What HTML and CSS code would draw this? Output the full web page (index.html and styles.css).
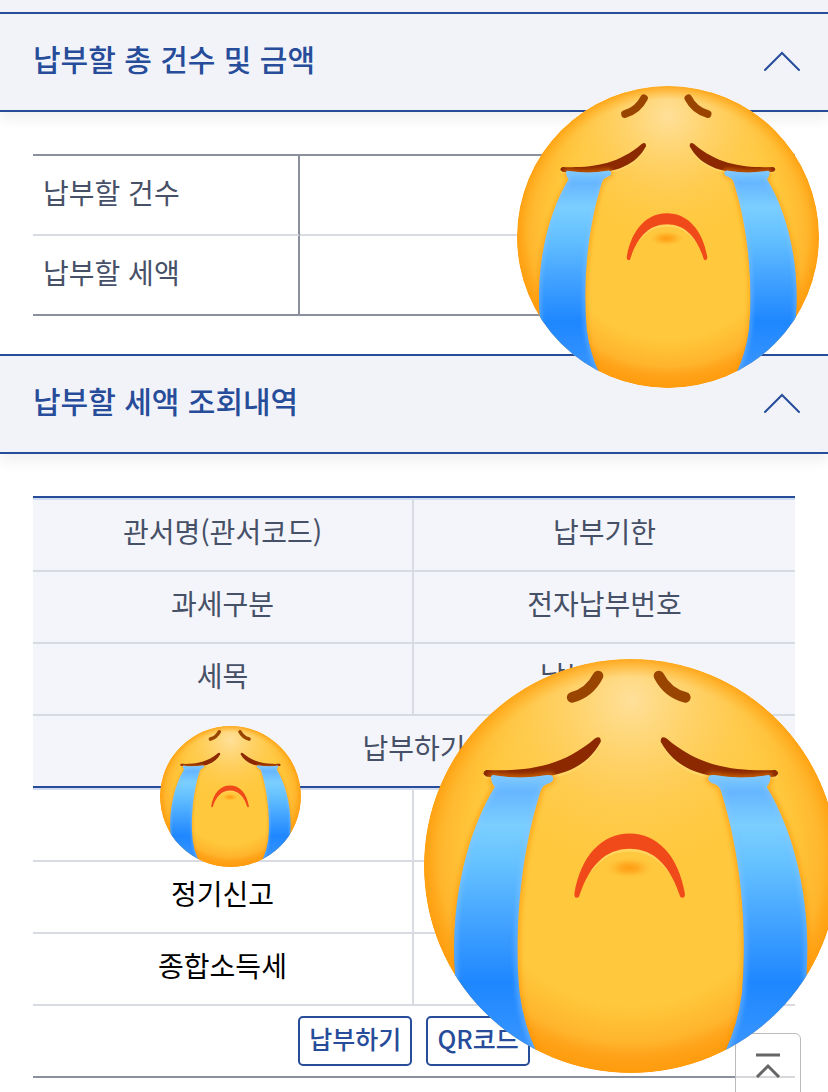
FILE: index.html
```html
<!DOCTYPE html>
<html lang="ko">
<head>
    <meta charset="UTF-8">
    <meta name="viewport" content="width=device-width, initial-scale=1.0">
    <title>납부할 세액 조회</title>
    <link rel="stylesheet" href="styles.css">
</head>
<body>
    <!-- shared crying face -->
    <svg class="defs" width="0" height="0" aria-hidden="true">
        <defs>
            <radialGradient id="skin" gradientUnits="userSpaceOnUse" cx="453" cy="415" r="505">
                <stop offset="0.68" stop-color="#ffc83d"/>
                <stop offset="0.84" stop-color="#ffb52c"/>
                <stop offset="0.97" stop-color="#ff8c04"/>
            </radialGradient>
            <radialGradient id="shine" gradientUnits="userSpaceOnUse" cx="453" cy="90" r="400">
                <stop offset="0" stop-color="#ffe09a"/>
                <stop offset="0.5" stop-color="#ffd062" stop-opacity="0.7"/>
                <stop offset="1" stop-color="#ffc83d" stop-opacity="0"/>
            </radialGradient>
            <radialGradient id="rim" gradientUnits="userSpaceOnUse" cx="453" cy="453" r="453">
                <stop offset="0.91" stop-color="#ffb020" stop-opacity="0"/>
                <stop offset="1" stop-color="#ffa010" stop-opacity="0.85"/>
            </radialGradient>
            <radialGradient id="chin">
                <stop offset="0" stop-color="#ff9c12"/>
                <stop offset="0.4" stop-color="#ffa61c" stop-opacity="0.8"/>
                <stop offset="1" stop-color="#ffc03a" stop-opacity="0"/>
            </radialGradient>
            <linearGradient id="water" gradientUnits="userSpaceOnUse" x1="0" y1="255" x2="0" y2="860">
                <stop offset="0" stop-color="#7ccaff"/>
                <stop offset="0.06" stop-color="#66b6ff"/>
                <stop offset="0.18" stop-color="#7acfff"/>
                <stop offset="0.34" stop-color="#62bfff"/>
                <stop offset="0.56" stop-color="#3e9fff"/>
                <stop offset="0.75" stop-color="#1e87ff"/>
                <stop offset="1" stop-color="#3a96ff"/>
            </linearGradient>
            <filter id="soft" x="-20%" y="-20%" width="140%" height="140%">
                <feGaussianBlur stdDeviation="6"/>
            </filter>
            <clipPath id="head"><circle cx="453" cy="453" r="453"/></clipPath>
            <path id="stream" d="M147 257 Q150 252 157 255 Q215 264 270 254 Q282 252 283 262 Q282 270 270 273 Q258 277 254 292 C214 420 196 580 209 730 Q218 800 247 862 V906 H40 L68 690 C56 520 100 370 155 280 Q146 268 147 257Z"/>
            <clipPath id="stream-clip"><use href="#stream"/></clipPath>
            <g id="eye">
                <path d="M136 243 C220 246 300 238 374 174 Q387 166 387 181 C350 250 270 272 136 257 Q124 250 136 243Z" fill="#ffdc74" opacity="0.6" transform="translate(0 6)"/>
                <path d="M136 243 C220 246 300 238 374 174 Q387 166 387 181 C350 250 270 272 136 257 Q124 250 136 243Z" fill="#8c2900"/>
                <use href="#stream" fill="none" stroke="#ff9306" stroke-width="8" opacity="0.8" filter="url(#soft)"/>
                <use href="#stream" fill="url(#water)"/>
                <g clip-path="url(#stream-clip)">
                    <use href="#stream" fill="none" stroke="#8cc8ff" stroke-width="12" opacity="0.5" filter="url(#soft)"/>
                </g>
            </g>
            <symbol id="crying" viewBox="0 0 906 906">
                <g clip-path="url(#head)">
                    <circle cx="453" cy="453" r="453" fill="url(#skin)"/>
                    <circle cx="453" cy="453" r="453" fill="url(#shine)"/>
                    <circle cx="453" cy="453" r="453" fill="url(#rim)"/>
                    <g fill="none" stroke="#994500" stroke-width="23" stroke-linecap="round">
                        <path d="M381 37 Q362 74 324 84"/>
                        <path d="M514 37 Q533 74 572 84"/>
                    </g>
                    <use href="#eye"/>
                    <use href="#eye" transform="matrix(-1 0 0 1 905 0)"/>
                    <path d="M365 463 C384 436 414 419 450 419 S516 436 535 463" fill="none" stroke="#ffdc74" stroke-width="6" opacity="0.6"/>
                    <path d="M329 514 C343 430 390 382 450 382 S557 430 571 514 Q571 526 561 521 C540 455 505 415 450 415 S360 455 339 521 Q329 526 329 514Z" fill="#f04a1a"/>
                    <ellipse cx="449" cy="457" rx="54" ry="24" fill="url(#chin)"/>
                </g>
            </symbol>
        </defs>
    </svg>

    <main class="page">
        <div class="strip"></div>

        <section class="section">
            <header class="section-header">
                <h2>납부할 총 건수 및 금액</h2>
                <button type="button" class="toggle" aria-label="접기">
                    <svg width="38" height="22" viewBox="0 0 38 22"><path d="M2 20 L19 3 L36 20" fill="none" stroke="currentColor" stroke-width="2" stroke-linecap="round"/></svg>
                </button>
            </header>
            <div class="section-body">
                <table class="summary">
                    <tbody>
                        <tr><th scope="row">납부할 건수</th><td></td></tr>
                        <tr><th scope="row">납부할 세액</th><td></td></tr>
                    </tbody>
                </table>
            </div>
            <svg class="face face-medium" role="img" aria-label="우는 얼굴"><use href="#crying"/></svg>
        </section>

        <section class="section">
            <header class="section-header">
                <h2>납부할 세액 조회내역</h2>
                <button type="button" class="toggle" aria-label="접기">
                    <svg width="38" height="22" viewBox="0 0 38 22"><path d="M2 20 L19 3 L36 20" fill="none" stroke="currentColor" stroke-width="2" stroke-linecap="round"/></svg>
                </button>
            </header>
            <div class="section-body">
                <table class="detail">
                    <colgroup>
                        <col class="col-left">
                        <col>
                    </colgroup>
                    <thead>
                        <tr><th scope="col">관서명(관서코드)</th><th scope="col">납부기한</th></tr>
                        <tr><th scope="col">과세구분</th><th scope="col">전자납부번호</th></tr>
                        <tr><th scope="col">세목</th><th scope="col">납부할세액</th></tr>
                        <tr><th scope="col" colspan="2">납부하기</th></tr>
                    </thead>
                    <tbody>
                        <tr><td></td><td></td></tr>
                        <tr><td>정기신고</td><td></td></tr>
                        <tr><td>종합소득세</td><td></td></tr>
                        <tr>
                            <td colspan="2">
                                <div class="actions">
                                    <button type="button" class="btn">납부하기</button>
                                    <button type="button" class="btn">QR코드</button>
                                </div>
                            </td>
                        </tr>
                    </tbody>
                </table>
            </div>
            <svg class="face face-small" role="img" aria-label="우는 얼굴"><use href="#crying"/></svg>
            <svg class="face face-large" role="img" aria-label="우는 얼굴"><use href="#crying"/></svg>
        </section>
    </main>

    <button type="button" class="to-top" aria-label="맨 위로">
        <svg width="26" height="26" viewBox="0 0 26 26" fill="none" stroke="currentColor" stroke-width="3"><path d="M1 3 H25 M2 25 L13 14 L24 25"/></svg>
    </button>
</body>
</html>
```

FILE: styles.css
```css
* {
    box-sizing: border-box;
}

body {
    margin: 0;
    background-color: #fff;
    color: #000;
    font-family: "Noto Sans CJK KR", "Noto Sans", sans-serif;
    font-size: 28px;
    line-height: 40px;
    overflow: hidden;
}

.defs {
    position: absolute;
}

.page {
    min-height: 100vh;
}

.strip {
    height: 12px;
    background-color: #f2f3f9;
}

.section {
    position: relative;
}

.section-header {
    display: flex;
    justify-content: space-between;
    align-items: center;
    height: 100px;
    padding: 0 27px 0 33px;
    background-color: #f2f3f9;
    border-top: 2px solid #264c9a;
    border-bottom: 2px solid #264c9a;
    box-shadow: 0 8px 12px rgba(0, 0, 0, 0.06);
}

.section-header h2 {
    margin: 0;
    padding-bottom: 8px;
    font-size: 30px;
    font-weight: 500;
    color: #264c9a;
}

.toggle {
    display: flex;
    padding: 0;
    margin-bottom: 2px;
    border: none;
    background: none;
    color: #264c9a;
    cursor: pointer;
}

.section-body {
    padding: 42px 33px 38px;
}

table {
    width: 100%;
    border-collapse: separate;
    border-spacing: 0;
    table-layout: fixed;
}

th {
    color: #465067;
    font-weight: 400;
}

th,
td {
    padding: 0 10px 8px;
}

.summary {
    border-top: 2px solid #8a909c;
}

.summary th,
.summary td {
    height: 80px;
    padding-bottom: 6px;
    border-bottom: 2px solid #d9dbe3;
}

.summary th {
    width: 35%;
    text-align: left;
    border-right: 2px solid #8a909c;
}

.summary tr:last-child th,
.summary tr:last-child td {
    border-bottom-color: #8a909c;
}

.detail {
    border-top: 2px solid #264c9a;
    text-align: center;
}

.col-left {
    width: calc(50% - 2px);
}

.detail th,
.detail td {
    height: 72px;
    border-bottom: 2px solid #d9dbe3;
}

.detail th {
    background-color: #f4f5fa;
    border-bottom-color: #d6dbe1;
}

.detail th:first-child,
.detail td:first-child {
    border-right: 2px solid #d9dbe3;
}

.detail tr:first-child th,
.detail tr:first-child td {
    height: 74px;
    border-top: 2px solid #d2dcf0;
}

.detail th[colspan],
.detail td[colspan] {
    border-right: none;
}

.detail thead tr:last-child th {
    border-bottom-color: #264c9a;
}

.detail tbody tr:last-child td {
    padding-bottom: 0;
    border-bottom-color: #8a909c;
}

.actions {
    display: flex;
    justify-content: center;
    gap: 14px;
}

.btn {
    height: 50px;
    padding: 0 9px 8px;
    background-color: #fff;
    border: 2px solid #264c9a;
    border-radius: 5px;
    color: #264c9a;
    font-family: inherit;
    font-size: 25px;
    font-weight: 500;
    line-height: 40px;
    cursor: pointer;
}

.face {
    position: absolute;
    z-index: 2;
}

.face-medium {
    top: 74px;
    right: 9px;
    width: 302px;
    height: 302px;
}

.face-small {
    top: 372px;
    left: 160px;
    width: 141px;
    height: 141px;
}

.face-large {
    top: 305px;
    right: -10px;
    width: 414px;
    height: 414px;
}

.to-top {
    position: fixed;
    right: 27px;
    bottom: -7px;
    z-index: 1;
    display: flex;
    justify-content: center;
    width: 66px;
    height: 66px;
    padding: 18px 0 0;
    background-color: rgba(255, 255, 255, 0.65);
    border: 1px solid #bbb;
    border-radius: 6px;
    color: #666;
    cursor: pointer;
}
```
